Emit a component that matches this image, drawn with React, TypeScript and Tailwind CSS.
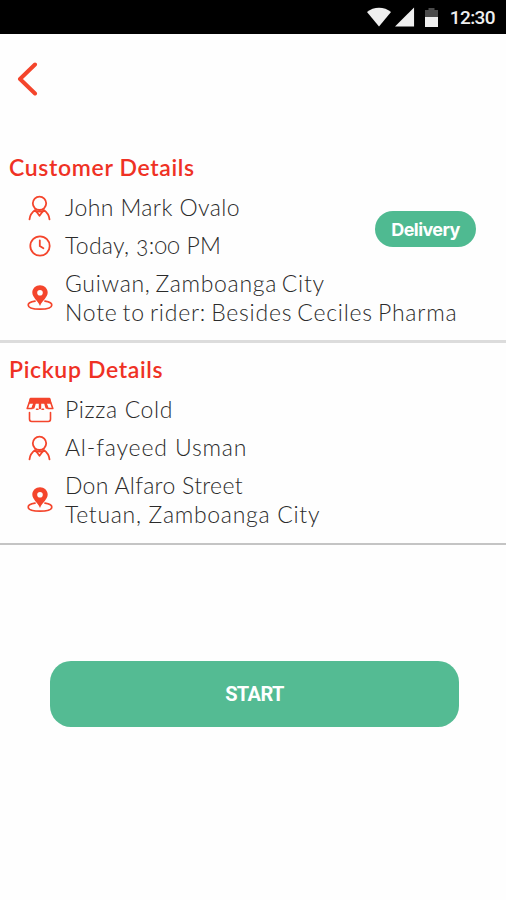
import type { ReactNode } from "react";

function PersonIcon() {
    return (
        <svg width="24" height="26" viewBox="0 0 24 26" fill="none" stroke="#f4452c" strokeWidth="1.8" strokeLinecap="round" strokeLinejoin="round">
            <circle cx="11.5" cy="8.3" r="6.7" />
            <path d="M1.500 24.400C1.900 20 3.900 17.300 7.200 15L11.500 20.800L15.800 15C19.100 17.300 21.100 20 21.500 24.400" />
            <path d="M8.200 16.500H14.700" />
        </svg>
    );
}

function ClockIcon() {
    return (
        <svg width="24" height="24" viewBox="0 0 24 24" fill="none" stroke="#f4452c" strokeWidth="1.8" strokeLinecap="round">
            <circle cx="12" cy="12" r="9.700" />
            <path d="M11.8 6.3V12L15.4 14.2" />
        </svg>
    );
}

function PinIcon() {
    return (
        <svg width="26" height="26" viewBox="0 0 26 26" fill="none">
            <path d="M8 16.2C3.8 16.9 1.2 18.2 1.2 20C1.2 22.6 6.2 24.2 13 24.2S24.8 22.6 24.8 20C24.8 18.2 22.2 16.9 18 16.2" stroke="#f4452c" strokeWidth="1.7" strokeLinecap="round" />
            <path fillRule="evenodd" d="M13 .3C8.800 .3 5.300 3.500 5.300 7.600C5.300 12.300 10.500 15.500 13 20.900C15.500 15.500 20.700 12.300 20.700 7.600C20.700 3.500 17.200 .3 13 .3ZM13 5A2.800 2.800 0 1 1 13 10.600A2.800 2.800 0 0 1 13 5Z" fill="#f4452c" />
        </svg>
    );
}

function StoreIcon() {
    return (
        <svg width="28" height="26" viewBox="0 0 28 26" fill="none" stroke="#f4452c" strokeWidth="1.6" strokeLinecap="round" strokeLinejoin="round">
            <path d="M4.500 1.500H23.500L24.500 6H3.500Z" fill="#f4452c" />
            <path d="M4.500 2L1.200 11.500H6L9 4M23.500 2L26.800 11.500H22L19 4" />
            <path d="M7.500 10.500L9 5M14 5V11M20.500 10.500L19 5" strokeWidth="2.4" />
            <path d="M10.500 12.200H12M16 12.200H17.500" />
            <path d="M3.500 15.500V22C3.500 23.500 4.200 24.500 5.700 24.500H22.300C23.800 24.500 24.500 23.500 24.500 22V15.500" />
        </svg>
    );
}

function Row({ icon, children }: { icon: ReactNode; children: ReactNode }) {
    return (
        <div className="flex h-[38px] items-center">
            <div className="ml-[25px] flex w-[30px] justify-center pt-[2px]">{icon}</div>
            <p className="ml-[10px] whitespace-nowrap pt-[1px]">{children}</p>
        </div>
    );
}

function Address({ children }: { children: ReactNode }) {
    return (
        <div className="flex h-[67px] items-center">
            <div className="ml-[25px] flex w-[30px] justify-center">
                <PinIcon />
            </div>
            <div className="ml-[10px] whitespace-nowrap pt-[1px] leading-[29.5px]">{children}</div>
        </div>
    );
}

export default function App() {
    return (
        <main className="h-[900px] w-[506px] overflow-hidden bg-[#fefefe] font-['Lato',sans-serif] text-[23px] font-light text-[#2b2b2b]">
            <div className="flex h-[34px] items-center justify-end bg-black pr-[11px]">
                <svg width="26" height="20" viewBox="0 0 26 20" fill="#efefef">
                    <path d="M1 5C7.500-.8 18.500-.8 25 5L13 19.500Z" />
                </svg>
                <svg className="ml-[3px]" width="20" height="20" viewBox="0 0 21 20" fill="#efefef">
                    <path d="M20 0V20H0Z" />
                </svg>
                <svg className="ml-[10px]" width="13" height="19" viewBox="0 0 13 19">
                    <path d="M3.500 0H9.500V2H13V10H0V2H3.500Z" fill="#4b4b4b" />
                    <path d="M0 9H13V19H0Z" fill="#efefef" />
                </svg>
                <span className="ml-[12px] font-['Roboto'] text-[19px] font-medium leading-none tracking-[-0.6px] text-[#eeeeee]">12:30</span>
            </div>
            <header className="h-[112px] pl-[17px] pt-[28px]">
                <svg width="22" height="34" viewBox="0 0 22 34" fill="none" stroke="#f4452c" strokeWidth="4" strokeLinecap="round" strokeLinejoin="round">
                    <path d="M18 2.500L3 17L18 31.500" />
                </svg>
            </header>

            <section className="h-[197px] border-b-[3px] border-[#dcdcdc]">
                <h2 className="flex h-[42px] items-center pl-[9px] font-semibold tracking-[0.65px] text-[#ef3124]">Customer Details</h2>
                <div className="flex justify-between">
                    <div>
                        <Row icon={<PersonIcon />}><span className="tracking-[0.4px]">John Mark Ovalo</span></Row>
                        <Row icon={<ClockIcon />}><span className="tracking-[0.3px] oldstyle-nums">Today, 3:00 PM</span></Row>
                    </div>
                    <div className="mr-[30px] mt-[23px] flex h-[36px] w-[101px] items-center justify-center rounded-full bg-[#4fba91] font-['Inter'] text-[18px] font-bold tracking-[-0.6px] text-white">
                        Delivery
                    </div>
                </div>
                <Address>
                    <p className="tracking-[0.68px] [word-spacing:-2px]">Guiwan, Zamboanga City</p>
                    <p className="tracking-[0.78px] [word-spacing:-2px]">Note to rider: Besides Ceciles Pharma</p>
                </Address>
            </section>

            <section className="h-[202px] border-b-2 border-[#c4c4c4] pt-[5px]">
                <h2 className="flex h-[42px] items-center pl-[9px] font-semibold tracking-[0.65px] text-[#ef3124]">Pickup Details</h2>
                <Row icon={<StoreIcon />}><span className="tracking-[0.6px]">Pizza Cold</span></Row>
                <Row icon={<PersonIcon />}><span className="tracking-[0.85px]">Al-fayeed Usman</span></Row>
                <Address>
                    <p className="tracking-[0.3px]">Don Alfaro Street</p>
                    <p className="tracking-[0.7px]">Tetuan, Zamboanga City</p>
                </Address>
            </section>

            <button className="ml-[50px] mt-[116px] flex h-[66px] w-[409px] items-center justify-center rounded-[21px] bg-[#54bb93] font-['Roboto'] text-[20px] font-bold tracking-[-0.6px] text-white">
                START
            </button>
        </main>
    );
}
